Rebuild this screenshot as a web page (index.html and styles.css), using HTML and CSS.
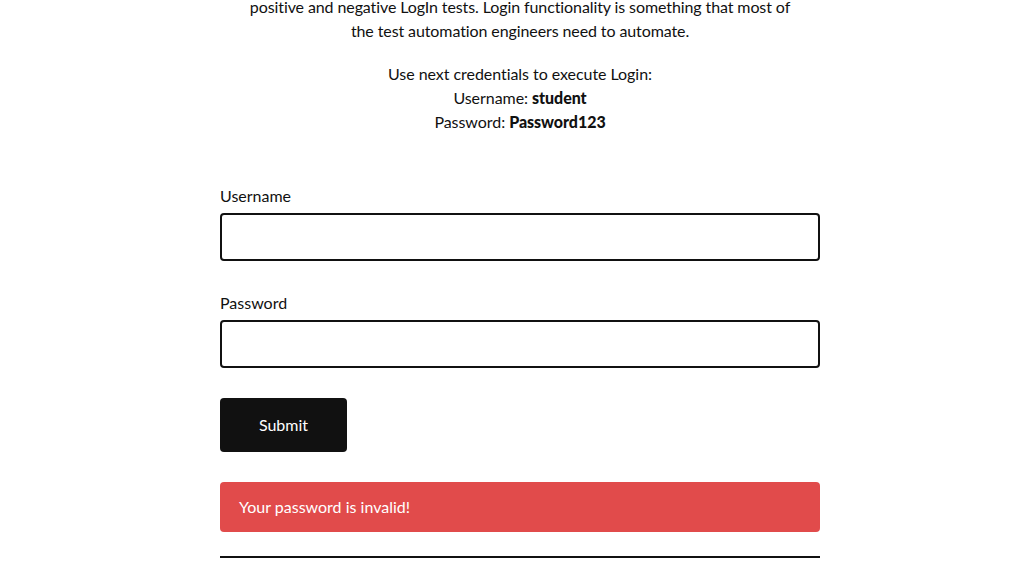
FILE: index.html
```html
<!DOCTYPE html>
<html lang="en">
<head>
<meta charset="utf-8">
<title>Test Login</title>
<link rel="stylesheet" href="styles.css">
</head>
<body>
<main class="page">
  <section class="intro">
    <p class="lead">positive and negative LogIn tests. Login functionality is something that most of the test automation engineers need to automate.</p>
    <p class="creds">Use next credentials to execute Login:<br>Username: <strong>student</strong><br>Password: <strong>Password123</strong></p>
  </section>
  <form class="login">
    <div class="field">
      <label for="username">Username</label>
      <input id="username" type="text">
    </div>
    <div class="field">
      <label for="password">Password</label>
      <input id="password" type="password">
    </div>
    <button type="button" class="submit">Submit</button>
    <div class="alert">Your password is invalid!</div>
    <hr class="rule">
  </form>
</main>
</body>
</html>
```
FILE: styles.css
```css
html, body {
  margin: 0;
  padding: 0;
  background: #fff;
}
body {
  font-family: Lato, "Open Sans", sans-serif;
  font-size: 16px;
  line-height: 24px;
  color: #111;
}
.page {
  width: 600px;
  margin: -5px 0 0 220px;
}
.intro {
  text-align: center;
}
.lead {
  margin: 0 auto 19px;
  width: 560px;
  letter-spacing: -0.1px;
}
.creds {
  margin: 0 0 50px;
  letter-spacing: -0.05px;
}
.creds strong {
  font-weight: 900;
}
.login {
  display: flex;
  flex-direction: column;
  align-items: flex-start;
}
.field {
  display: flex;
  flex-direction: column;
  width: 100%;
  margin-bottom: 30px;
}
.field label {
  display: block;
  margin-bottom: 5px;
}
.field input {
  box-sizing: border-box;
  width: 100%;
  height: 48px;
  border: 2px solid #111;
  border-radius: 4px;
  padding: 0 12px;
  font: inherit;
  background: #fff;
  outline: none;
}
.submit {
  box-sizing: border-box;
  width: 127px;
  height: 54px;
  border: none;
  border-radius: 4px;
  background: #111;
  color: #fff;
  font: inherit;
  font-weight: 400;
  cursor: pointer;
  margin-bottom: 30px;
}
.alert {
  box-sizing: border-box;
  width: 100%;
  height: 50px;
  padding: 13px 19px;
  background: #e14b4b;
  color: #fff;
  border-radius: 4px;
  margin-bottom: 24px;
}
.rule {
  width: 100%;
  margin: 0;
  border: none;
  height: 2px;
  background: #111;
}
```
